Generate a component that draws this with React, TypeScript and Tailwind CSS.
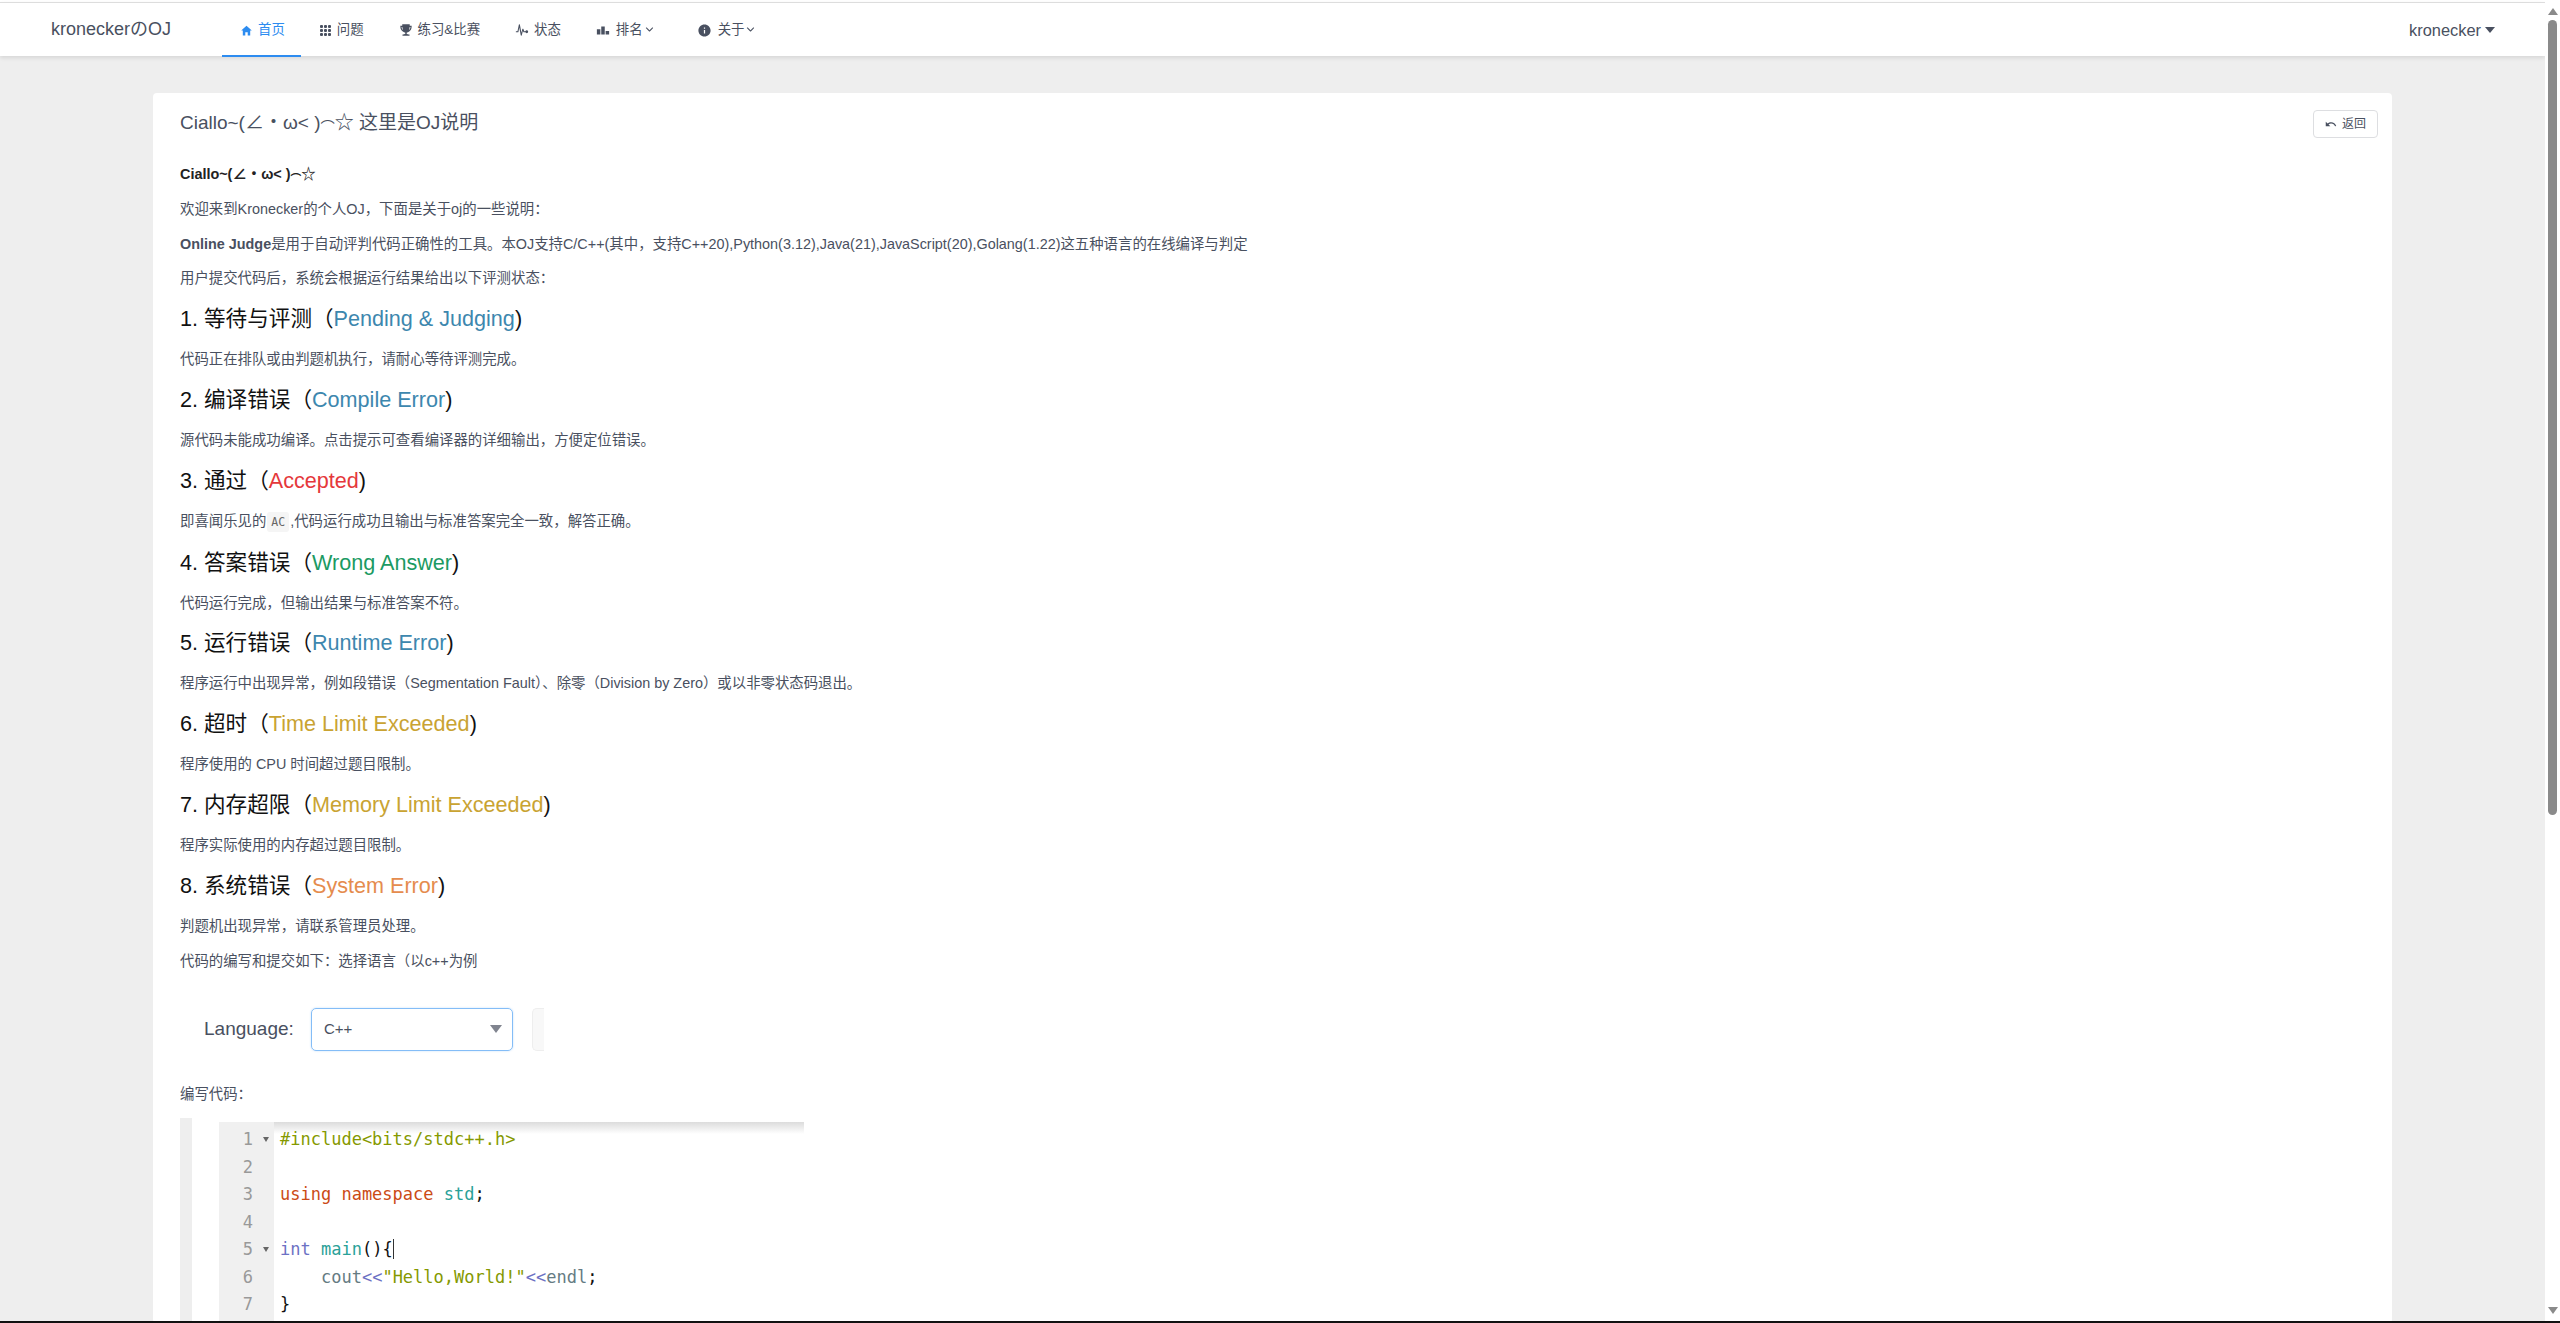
import {
  IoIosArrowDown,
  IoMdHome,
  IoMdInformationCircle,
  IoMdPodium,
  IoMdPulse,
  IoMdTrophy,
  IoMdUndo,
} from "react-icons/io";

const sans = "font-['Liberation_Sans','Noto_Sans_CJK_SC',sans-serif]";

function DotsIcon() {
  return (
    <svg width="13" height="13" viewBox="0 0 13 13" fill="currentColor">
      {[1, 5, 9].map((y) =>
        [1, 5, 9].map((x) => <rect key={`${x}-${y}`} x={x} y={y} width="3" height="3" rx="1" />),
      )}
    </svg>
  );
}

const navItems = [
  { label: "问题", icon: <DotsIcon /> },
  { label: "练习&比赛", icon: <IoMdTrophy size={14} /> },
  { label: "状态", icon: <IoMdPulse size={14} /> },
];

const sections = [
  {
    title: "1. 等待与评测（",
    status: "Pending & Judging",
    color: "text-[#3d87ae]",
    desc: "代码正在排队或由判题机执行，请耐心等待评测完成。",
  },
  {
    title: "2. 编译错误（",
    status: "Compile Error",
    color: "text-[#3d87ae]",
    desc: "源代码未能成功编译。点击提示可查看编译器的详细输出，方便定位错误。",
  },
  {
    title: "3. 通过（",
    status: "Accepted",
    color: "text-[#e5383b]",
    desc: (
      <>
        即喜闻乐见的
        <code className="mx-[1px] rounded-[3px] bg-[#f5f5f5] px-[4px] py-[3px] font-['DejaVu_Sans_Mono',monospace] text-[11.5px] text-[#666]">
          AC
        </code>
        ,代码运行成功且输出与标准答案完全一致，解答正确。
      </>
    ),
  },
  {
    title: "4. 答案错误（",
    status: "Wrong Answer",
    color: "text-[#1b9a63]",
    desc: "代码运行完成，但输出结果与标准答案不符。",
  },
  {
    title: "5. 运行错误（",
    status: "Runtime Error",
    color: "text-[#3d87ae]",
    desc: "程序运行中出现异常，例如段错误（Segmentation Fault）、除零（Division by Zero）或以非零状态码退出。",
  },
  {
    title: "6. 超时（",
    status: "Time Limit Exceeded",
    color: "text-[#c9a332]",
    desc: "程序使用的 CPU 时间超过题目限制。",
  },
  {
    title: "7. 内存超限（",
    status: "Memory Limit Exceeded",
    color: "text-[#c9a332]",
    desc: "程序实际使用的内存超过题目限制。",
  },
  {
    title: "8. 系统错误（",
    status: "System Error",
    color: "text-[#e58c4e]",
    desc: "判题机出现异常，请联系管理员处理。",
  },
];

function Paragraph({ children }: { children: React.ReactNode }) {
  return <p className="mb-[13.8px] text-[14.4px] leading-[21px] text-[#495060]">{children}</p>;
}

function Kaomoji() {
  return (
    <>
      Ciallo~(∠・ω&lt; )<span className="align-[-0.3em] text-[0.75em] leading-[0]">⌒</span>☆
    </>
  );
}

function CodeShot() {
  const nums = [1, 2, 3, 4, 5, 6, 7];
  return (
    <div className="flex h-[205px] w-[624px] items-stretch">
      <div className="w-[12px] bg-[#eeeeee]" />
      <div className="ml-[27px] mt-[4px] flex flex-1">
        <div className="w-[55px] bg-[#f0f0f0] pr-[21px] pt-[4px] text-right text-[#999]">
          {nums.map((n) => (
            <div key={n} className="relative h-[27.5px] leading-[27.5px]">
              {n}
              {(n === 1 || n === 5) && (
                <span className="absolute right-[-16px] top-[11px] h-0 w-0 border-x-[3px] border-t-[5px] border-x-transparent border-t-[#666]" />
              )}
            </div>
          ))}
        </div>
        <div className="flex-1 bg-gradient-to-b from-[#dcdcdc] via-white via-[12px] to-white pl-[6px] pt-[4px] whitespace-pre text-[#333]">
          <div className="h-[27.5px] leading-[27.5px] text-[#859900]">{"#include<bits/stdc++.h>"}</div>
          <div className="h-[27.5px]" />
          <div className="h-[27.5px] leading-[27.5px]">
            <span className="text-[#cb4b16]">using namespace</span> <span className="text-[#2aa198]">std</span>
            <span className="text-[#111]">;</span>
          </div>
          <div className="h-[27.5px]" />
          <div className="h-[27.5px] leading-[27.5px]">
            <span className="text-[#6c71c4]">int</span> <span className="text-[#2aa198]">main</span>
            <span className="border-r border-[#333] text-[#111]">{"(){"}</span>
          </div>
          <div className="h-[27.5px] leading-[27.5px]">
            {"    "}
            <span className="text-[#657b83]">cout</span>
            <span className="text-[#6c71c4]">{"<<"}</span>
            <span className="text-[#859900]">"Hello,World!"</span>
            <span className="text-[#6c71c4]">{"<<"}</span>
            <span className="text-[#657b83]">endl</span>
            <span className="text-[#111]">;</span>
          </div>
          <div className="h-[27.5px] leading-[27.5px] text-[#111]">{"}"}</div>
        </div>
      </div>
    </div>
  );
}

function Scrollbar() {
  return (
    <div className="flex w-[15px] flex-col items-center bg-white pt-[8px]">
      <span className="h-0 w-0 border-x-[5px] border-b-[7px] border-x-transparent border-b-[#8a8a8a]" />
      <div className="mt-[5px] h-[795px] w-[9px] rounded-[5px] bg-[#8a8a8a]" />
      <span className="mt-auto mb-[7px] h-0 w-0 border-x-[5px] border-t-[7px] border-x-transparent border-t-[#8a8a8a]" />
    </div>
  );
}

export default function App() {
  return (
    <div className={`flex h-screen flex-col overflow-hidden bg-white ${sans}`}>
      <div className="flex min-h-0 flex-1">
        <div className="flex min-w-0 flex-1 flex-col overflow-hidden bg-[#eeeeee]">
          <div className="h-[2px] shrink-0 bg-white" />
          <header className="relative z-10 flex h-[54px] shrink-0 items-center border-t border-[#dddddd] bg-white text-[#495060] shadow-[0_2px_4px_rgba(0,0,0,0.1)]">
            <div className="ml-[51px] w-[171px] text-[18px]">kroneckerのOJ</div>
            <nav className="flex h-full items-center text-[13.4px]">
              <a className="flex h-[54px] items-center gap-[5px] border-b-2 border-[#2d8cf0] pl-[18px] pr-[16px] pt-[3px] text-[#2d8cf0]">
                <IoMdHome size={13} />
                首页
              </a>
              {navItems.map((item) => (
                <a key={item.label} className="flex h-full items-center gap-[5px] pl-[18px] pr-[17px] pt-[1px]">
                  {item.icon}
                  {item.label}
                </a>
              ))}
              <a className="flex h-full items-center gap-[6px] pl-[18px] pr-[17px] pt-[1px]">
                <IoMdPodium size={14} />
                <span className="flex items-center gap-[1px]">
                  排名
                  <IoIosArrowDown size={11} />
                </span>
              </a>
              <a className="ml-[7px] flex h-full items-center gap-[6px] pl-[18px] pr-[17px] pt-[1px]">
                <IoMdInformationCircle size={15} />
                <span className="flex items-center gap-[1px]">
                  关于
                  <IoIosArrowDown size={11} />
                </span>
              </a>
            </nav>
            <div className="ml-auto mr-[50px] mt-[2px] flex items-center gap-[4px] text-[16.4px]">
              kronecker
              <span className="h-0 w-0 border-x-[5.5px] border-t-[6px] border-x-transparent border-t-[#495060]" />
            </div>
          </header>

          <main className="mx-[153px] mt-[37px] rounded-[4px] bg-white pl-[27px] pr-[14px]">
            <div className="flex items-start justify-between pt-[17px]">
              <h2 className="mt-[1px] text-[19px] leading-[24px] text-[#495060]">
                <Kaomoji /> 这里是OJ说明
              </h2>
              <button className="flex h-[28px] w-[65px] items-center justify-center gap-[5px] rounded-[4px] border border-[#dddee1] text-[12px] text-[#495060]">
                <IoMdUndo size={12} />
                返回
              </button>
            </div>
            <div className="mt-[26px]">
              <Paragraph>
                <strong className="text-[#222]">
                  <Kaomoji />
                </strong>
              </Paragraph>
              <Paragraph>欢迎来到Kronecker的个人OJ，下面是关于oj的一些说明：</Paragraph>
              <Paragraph>
                <strong>Online Judge</strong>
                是用于自动评判代码正确性的工具。本OJ支持C/C++(其中，支持C++20),Python(3.12),Java(21),JavaScript(20),Golang(1.22)这五种语言的在线编译与判定
              </Paragraph>
              <Paragraph>用户提交代码后，系统会根据运行结果给出以下评测状态：</Paragraph>
              {sections.map((s) => (
                <section key={s.status}>
                  <h3 className="mb-[13.8px] mt-[13.8px] text-[21.6px] leading-[32.2px] text-[#111]">
                    {s.title}
                    <span className={s.color}>{s.status}</span>)
                  </h3>
                  <Paragraph>{s.desc}</Paragraph>
                </section>
              ))}
              <Paragraph>代码的编写和提交如下：选择语言（以c++为例</Paragraph>
            </div>
            <div className="mt-[36px] flex h-[43px] items-center">
              <span className="ml-[24px] w-[107px] text-[19px] text-[#495060]">Language:</span>
              <div className="flex h-[43px] w-[202px] items-center justify-between rounded-[5px] border border-[#84bdf7] pl-[12px] pr-[10px] text-[15px] text-[#495060] shadow-[0_0_2px_rgba(45,140,240,0.3)]">
                C++
                <span className="h-0 w-0 border-x-[6px] border-t-[8px] border-x-transparent border-t-[#80848f]" />
              </div>
              <div className="ml-[19px] h-[43px] w-[12px] rounded-l-[5px] border border-r-0 border-[#eeeeee] bg-[#f8f8f8]" />
            </div>
            <div className="mt-[33px]">
              <Paragraph>编写代码：</Paragraph>
            </div>
            <div className="mt-[5px] font-['DejaVu_Sans_Mono',monospace] text-[17px]">
              <CodeShot />
            </div>
          </main>
        </div>
        <Scrollbar />
      </div>
      <div className="h-[2px] shrink-0 bg-[#111]" />
    </div>
  );
}
